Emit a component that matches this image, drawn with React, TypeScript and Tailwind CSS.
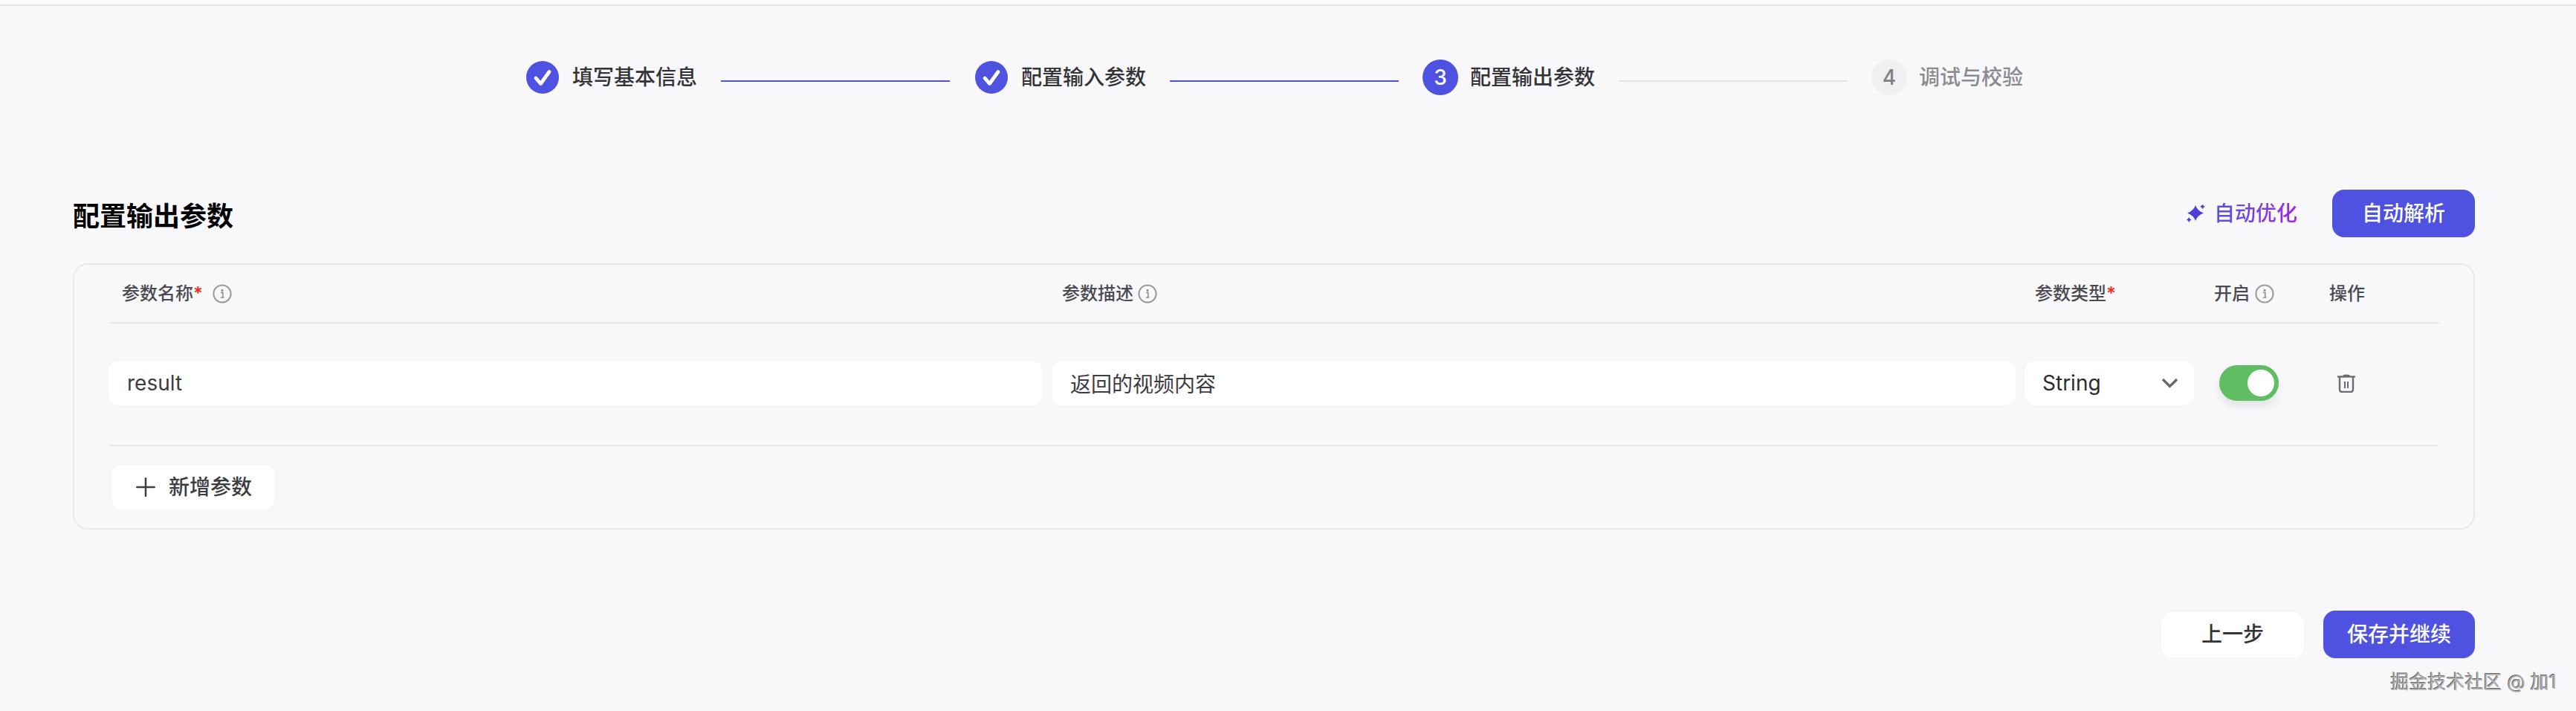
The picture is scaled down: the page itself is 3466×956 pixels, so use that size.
import React from 'react';
import { Plus } from 'lucide-react';

const FONT = { fontFamily: 'Inter, "Noto Sans CJK SC", sans-serif' };

const InfoIcon = () => (
    <svg width="26" height="26" viewBox="0 0 26 26" fill="none" className="shrink-0">
        <circle cx="13" cy="13" r="11.6" stroke="#9a9a9e" strokeWidth="2" />
        <circle cx="13" cy="8.2" r="1.5" fill="#8e8e92" />
        <path d="M11.2 11.4h2.6v6.4M10.8 18h4.6" stroke="#8e8e92" strokeWidth="1.6" />
    </svg>
);

const CheckCircle = () => (
    <div className="w-12 h-12 flex items-center justify-center shrink-0">
        <svg width="44" height="44" viewBox="0 0 44 44">
            <circle cx="22" cy="22" r="22" fill="#4f52e0" />
            <path d="M13 23l6.5 7.5L31 14.5" fill="none" stroke="#fff" strokeWidth="4.8" strokeLinecap="round" strokeLinejoin="round" />
        </svg>
    </div>
);

const StepLine = ({ active }: { active: boolean }) => (
    <div className={`w-[308px] h-[2px] mt-[9px] mx-8 shrink-0 ${active ? 'bg-[#4f52e0]' : 'bg-[#e3e4e8]'}`} />
);

const Required = () => <span className="text-[#f0301f] text-[24px] leading-none font-semibold">*</span>;

const Sparkle = () => (
    <svg width="25" height="24" viewBox="0 0 25 24" className="shrink-0" fill="#4b3fd8">
        <path d="M12 1Q14.500 8.500 23 11.500Q14.500 14.500 12 22Q9.500 14.500 1 11.500Q9.500 8.500 12 1Z" />
        <path d="M21.500 -.7Q22.300 1.900 24.900 2.700Q22.300 3.500 21.500 6.100Q20.700 3.500 18.100 2.700Q20.700 1.900 21.500 -.7Z" />
        <path d="M3.200 17.100Q4 19.700 6.600 20.500Q4 21.300 3.200 23.900Q2.400 21.300 -.2 20.500Q2.400 19.700 3.200 17.100Z" />
    </svg>
);

const TrashIcon = () => (
    <svg width="24" height="25" viewBox="0 0 24 25" fill="none" stroke="#6c6c72" strokeWidth="2.400">
        <path d="M7 3C7 1.200 9 .5 12 .5s5 .7 5 2.500z" fill="#6c6c72" stroke="none" />
        <path d="M0 3.500h24" />
        <path d="M3 4v17a3 3 0 0 0 3 3h12a3 3 0 0 0 3-3V4" />
        <path d="M10 10v9M14 10v9" strokeWidth="2" />
    </svg>
);

const Toggle = () => (
    <div className="relative w-20 h-12 rounded-full bg-[#5fbd62] shadow-[0_8px_12px_rgba(0,0,0,0.08)]">
        <div className="absolute right-[6px] top-[6px] w-9 h-9 rounded-full bg-white" />
    </div>
);

export default function App() {
    return (
        <div className="relative h-[956px] w-full overflow-hidden bg-[#f8f8fb]" style={FONT}>
            {/* Top edge */}
            <div className="h-[8px] bg-[#fbfbfc] border-b-2 border-[#e4e5e9]" />

            <div className="pl-[98px] pr-[136px]">
                {/* Steps */}
                <div className="flex items-center justify-center mt-[72px] h-12 text-[28px] font-medium leading-none">
                    <CheckCircle />
                    <span className="ml-4 text-[#333338] whitespace-nowrap">填写基本信息</span>
                    <StepLine active />
                    <CheckCircle />
                    <span className="ml-4 text-[#333338] whitespace-nowrap">配置输入参数</span>
                    <StepLine active />
                    <div className="w-12 h-12 rounded-full bg-[#4f52e0] text-white flex items-center justify-center shrink-0">3</div>
                    <span className="ml-4 text-[#333338] whitespace-nowrap">配置输出参数</span>
                    <StepLine active={false} />
                    <div className="w-12 h-12 rounded-full bg-[#f0f0f3] text-[#808085] flex items-center justify-center shrink-0">4</div>
                    <span className="ml-4 text-[#8a8a8f] whitespace-nowrap">调试与校验</span>
                </div>

                {/* Section header */}
                <div className="flex items-center justify-between mt-[127px] h-16">
                    <h2 className="text-[36px] leading-none font-semibold text-black mt-2">配置输出参数</h2>
                    <div className="flex items-center">
                        <button className="flex items-center gap-[12px] mr-[47px]">
                            <Sparkle />
                            <span className="text-[28px] font-medium leading-none bg-linear-to-r from-[#4f52e0] to-[#a01fe8] bg-clip-text text-transparent">自动优化</span>
                        </button>
                        <button className="w-[192px] h-16 rounded-2xl bg-[#4f52e0] text-white text-[28px] font-medium">自动解析</button>
                    </div>
                </div>

                {/* Parameter table */}
                <div className="mt-[35px] border-2 border-[#e8e9ed] rounded-[20px] px-[46px] pb-[25px]">
                    <div className="ml-[2px] h-[79px] border-b-2 border-[#e8e9ed] grid grid-cols-[1255px_1297px_228px_158px_148px] gap-x-3 items-center text-[24px] font-medium text-[#4a4a50] leading-none">
                        <div className="pl-[16px] flex items-center">
                            <span>参数名称</span>
                            <Required />
                            <span className="ml-[13px]"><InfoIcon /></span>
                        </div>
                        <div className="pl-[14px] flex items-center gap-[6px]">
                            <span>参数描述</span>
                            <InfoIcon />
                        </div>
                        <div className="pl-[14px] flex items-center">
                            <span>参数类型</span>
                            <Required />
                        </div>
                        <div className="pl-[15px] flex items-center gap-[7px]">
                            <span>开启</span>
                            <InfoIcon />
                        </div>
                        <div>操作</div>
                    </div>

                    <div className="mt-[50px] grid grid-cols-[1257px_1297px_228px_158px_148px] gap-x-3 items-center text-[28px] text-[#3c3c42]">
                        <input readOnly defaultValue="result" className="h-[60px] w-full rounded-[14px] bg-white shadow-[0_0_0_1px_#f3f4f6] pl-[25px] outline-none" />
                        <input readOnly defaultValue="返回的视频内容" className="h-[60px] w-full rounded-[14px] bg-white shadow-[0_0_0_1px_#f3f4f6] pl-[25px] outline-none" />
                        <div className="h-[60px] rounded-[14px] bg-white shadow-[0_0_0_1px_#f3f4f6] pl-[24px] pr-[21px] flex items-center justify-between text-[#2c2c30]">
                            <span>String</span>
                            <svg width="23" height="14" viewBox="0 0 23 14" fill="none">
                                <path d="M2 2l9.500 9.500L21 2" stroke="#66666b" strokeWidth="3.200" />
                            </svg>
                        </div>
                        <div className="pl-[22px]">
                            <Toggle />
                        </div>
                        <div className="pl-[11px]">
                            <TrashIcon />
                        </div>
                    </div>

                    <div className="mt-[53px] ml-[1px] mr-[2px] h-[2px] bg-[#e8e9ed]" />

                    <button className="mt-[25px] ml-[4px] w-[220px] h-[60px] rounded-[14px] bg-white shadow-[0_0_0_1px_#f3f4f6] flex items-center pl-[26px] gap-[11px] text-[28px] font-medium text-[#3c3c42]">
                        <Plus size={40} strokeWidth={1.5} color="#3c3c42" />
                        <span>新增参数</span>
                    </button>
                </div>

                {/* Footer actions */}
                <div className="mt-[109px] flex items-center justify-end gap-[26px]">
                    <button className="w-[192px] h-[61px] rounded-[14px] bg-white shadow-[0_0_0_1px_#f3f4f6] text-[28px] font-medium text-[#333338]">上一步</button>
                    <button className="w-[204px] h-16 rounded-2xl bg-[#4f52e0] text-white text-[28px] font-medium">保存并继续</button>
                </div>
            </div>

            {/* Watermark */}
            <div className="absolute right-[26px] top-[902px] text-[25px] leading-[30px] whitespace-nowrap text-[#b0b0b0] [text-shadow:-1px_-1px_0_#666]">
                掘金技术社区 @ 加1
            </div>
        </div>
    );
}
